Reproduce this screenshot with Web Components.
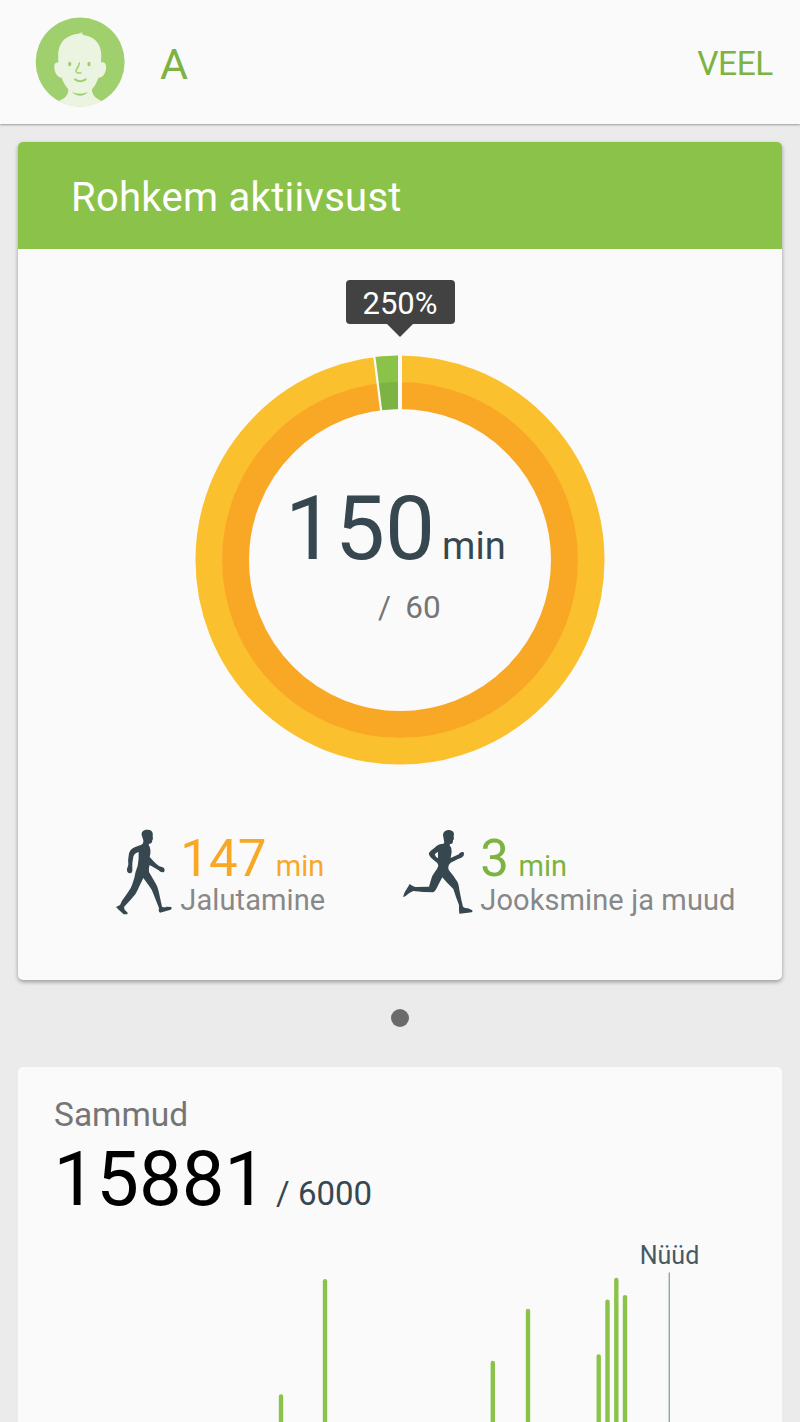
<!DOCTYPE html>
<html lang="et">
<head>
<meta charset="UTF-8">
<meta name="viewport" content="width=device-width, initial-scale=1.0">
<title>Rohkem aktiivsust</title>
<style>
  html, body {
    margin: 0;
    height: 1422px;
    overflow: hidden;
    background-color: #ebebeb;
    font-family: Roboto, "Liberation Sans", sans-serif;
  }
</style>
</head>
<body>
<health-app>
  <app-header name="A" action="VEEL"></app-header>
  <goal-card heading="Rohkem aktiivsust">
    <activity-ring value="150" unit="min" goal="60" percent="250%" share="2"></activity-ring>
    <activity-stat slot="stats" icon="walk" value="147" unit="min" label="Jalutamine" color="#f9a825"></activity-stat>
    <activity-stat slot="stats" icon="run" value="3" unit="min" label="Jooksmine ja muud" color="#7cb342"></activity-stat>
  </goal-card>
  <page-dots></page-dots>
  <steps-card label="Sammud" value="15881" goal="6000">
    <steps-chart now="Nüüd" now-x="651" bars="263:153.3,307:38,474.8:119.7,510:67.7,580.7:113.3,589.5:58.5,598.3:36.8,607:54"></steps-chart>
  </steps-card>
</health-app>

<script>
class HealthApp extends HTMLElement {
  constructor() {
    super();
    this.attachShadow({ mode: 'open' });
    this.shadowRoot.innerHTML = `
      <style>
        :host {
          display: flex;
          flex-direction: column;
          width: 800px;
        }
      </style>
      <slot></slot>
    `;
  }
}

class AppHeader extends HTMLElement {
  constructor() {
    super();
    this.attachShadow({ mode: 'open' });
    this.shadowRoot.innerHTML = `
      <style>
        :host {
          display: flex;
          align-items: center;
          box-sizing: border-box;
          height: 124px;
          padding: 0 27px 0 35px;
          background-color: #fafafa;
          box-shadow: 0 1px 2px rgba(0, 0, 0, 0.35);
          color: #7cb342;
        }

        svg {
          width: 90px;
          height: 90px;
        }

        .name {
          flex: 1;
          margin: 4px 0 0 35px;
          font-size: 43px;
          line-height: 50px;
        }

        .action {
          margin-top: 4px;
          font-size: 33.5px;
          line-height: 40px;
          letter-spacing: -0.4px;
        }
      </style>
      <svg viewBox="105 51 270 270">
        <defs><clipPath id="disc"><circle cx="240.5" cy="186" r="134"/></clipPath></defs>
        <circle cx="240.5" cy="186" r="133.5" fill="#a0cf6e"/>
        <path clip-path="url(#disc)" fill="#ebf4e0" d="M175 188C173 158 176 142 184 130C194 113 212 105 229 102C237 101 242 99 247 95L244 103L250 101L249 105C282 108 303 130 304 165L303 188C314 184 320 193 318 206C316 222 307 234 295 233C290 249 285 257 276 268C276 286 288 296 303 302L310 330H170L176 303C194 297 205 286 205 268C195 256 190 247 185 233C172 232 164 218 163 203C162 191 167 186 175 188Z"/>
        <g fill="#a0cf6e">
          <rect x="204.5" y="185" width="9" height="14" rx="4.5"/>
          <rect x="262.5" y="185" width="9" height="14" rx="4.5"/>
          <path d="M216 276Q240 286 264 276Q241 299 216 276Z"/>
        </g>
        <g fill="none" stroke="#a0cf6e" stroke-linecap="round">
          <path stroke-width="4.5" d="M238 189C237 201 228 206 228 213C228 219 235 220 243 219"/>
          <path stroke-width="6" d="M225 238Q240 249 257 238"/>
        </g>
      </svg>
      <span class="name">${this.getAttribute('name')}</span>
      <span class="action">${this.getAttribute('action')}</span>
    `;
  }
}

class GoalCard extends HTMLElement {
  constructor() {
    super();
    this.attachShadow({ mode: 'open' });
    this.shadowRoot.innerHTML = `
      <style>
        :host {
          display: flex;
          flex-direction: column;
          height: 838px;
          margin: 18px 18px 0;
          border-radius: 5px;
          background-color: #fafafa;
          box-shadow: 0 2px 4px rgba(0, 0, 0, 0.34);
        }

        .heading {
          box-sizing: border-box;
          height: 107px;
          padding: 2px 54px 0 53px;
          border-radius: 5px 5px 0 0;
          background-color: #8bc34a;
          color: #fff;
          font-size: 40px;
          line-height: 107px;
          letter-spacing: 0.28px;
        }

        .ring {
          display: flex;
          justify-content: center;
          padding-top: 106px;
        }

        .stats {
          display: grid;
          grid-template-columns: 287px auto;
          padding: 64px 0 0 97px;
        }
      </style>
      <div class="heading">${this.getAttribute('heading')}</div>
      <div class="ring"><slot></slot></div>
      <div class="stats"><slot name="stats"></slot></div>
    `;
  }
}

class ActivityRing extends HTMLElement {
  constructor() {
    super();
    this.attachShadow({ mode: 'open' });
    this.shadowRoot.innerHTML = `
      <style>
        :host {
          display: grid;
          position: relative;
          width: 410px;
          height: 410px;
        }

        svg, .center {
          grid-area: 1 / 1;
        }

        .center {
          display: flex;
          flex-direction: column;
          padding-top: 122px;
          color: #37474f;
        }

        .total {
          padding-left: 90px;
          font-size: 89px;
          line-height: 104px;
          white-space: nowrap;
        }

        .unit {
          margin-left: 7px;
          font-size: 38px;
          line-height: 0;
        }

        .goal {
          margin-top: 9px;
          padding-left: 183px;
          font-size: 31.5px;
          line-height: 36px;
          color: #757575;
          word-spacing: 6.5px;
        }

        .tooltip {
          position: absolute;
          top: -75px;
          left: 150.5px;
          width: 109px;
          height: 44px;
          border-radius: 4px;
          background-color: #424242;
          color: #fff;
          font-size: 31px;
          line-height: 47px;
          text-align: center;
        }

        .tooltip::after {
          content: "";
          position: absolute;
          top: 44px;
          left: 41px;
          border: 13.5px solid transparent;
          border-top-color: #424242;
          border-bottom: 0;
        }
      </style>
      <svg viewBox="-205 -205 410 410">
        <g fill="none" stroke-width="27">
          <circle r="191" stroke="#fbc02d"/>
          <circle r="164.5" stroke="#f9a825"/>
          <g class="share"></g>
        </g>
        <path d="M0 -207V-148" stroke="#fafafa" stroke-width="4"/>
        <path class="edge" d="M0 -207V-148" stroke="#fafafa" stroke-width="2.2"/>
      </svg>
      <div class="center">
        <div class="total">${this.getAttribute('value')}<span class="unit">${this.getAttribute('unit')}</span></div>
        <div class="goal">/ ${this.getAttribute('goal')}</div>
      </div>
      <div class="tooltip">${this.getAttribute('percent')}</div>
    `;
    this.drawShare(Number(this.getAttribute('share')));
  }

  // second activity, drawn back from twelve o'clock
  drawShare(percent) {
    const angle = percent * 3.6;
    const rad = angle * Math.PI / 180;
    const arc = (r, color) =>
      `<path stroke="${color}" d="M${-r * Math.sin(rad)} ${-r * Math.cos(rad)}A${r} ${r} 0 0 1 0 ${-r}"/>`;
    this.shadowRoot.querySelector('.share').innerHTML = arc(191, '#8bc34a') + arc(164.5, '#7cb342');
    this.shadowRoot.querySelector('.edge').setAttribute('transform', `rotate(${-angle})`);
  }
}

const ICONS = {
  walk: {
    box: '45 28 175 260',
    path: 'M125 46C123 34 134 29 144 30C156 31 160 38 158 50L159 58L157 61C157 69 153 73 147 72L146 76C152 84 153 98 149 112L160 124Q168 133 178 140L188 143C194 145 196 152 192 157C186 160 180 156 176 152L149 136Q145 146 147 157L168 193Q174 203 176 215L186 261Q194 264 200 261L214 262Q217 267 212 270L196 275L180 279L176 274L177 265L160 222Q157 212 148 200L130 175L118 200Q112 214 106 224L92 240L72 262L74 270L83 279L82 284H71L56 270L48 262L60 256L66 243L84 218Q93 206 96 196L103 175Q105 158 113 138Q117 118 116 97Q103 101 100 111L97 130L97 148C98 156 95 161 90 161C83 161 80 155 81 148L85 135Q83 122 86 108Q88 88 104 83L122 76Q131 74 130 62Z'
  },
  run: {
    box: '36 28 214 260',
    path: 'M160 52C156 38 166 31 177 31C190 32 194 40 191 50L192 58L189 62C190 70 186 74 180 73L179 77Q186 84 185 97L182 115L200 107L207 104C207 98 217 95 221 98C224 106 220 112 214 114L204 118L182 129Q175 134 175 142Q174 148 178 153L190 168L202 186Q206 192 208 210L214 240L219 261Q226 267 234 266L247 272Q249 276 245 278L228 280L208 282L207 270V256L198 232L190 208L170 188L157 173L145 195Q138 212 130 218L100 217L70 214L58 220L46 230L39 232L44 218L56 198L59 193L68 199L76 202L117 201L122 184Q126 166 135 156Q143 146 145 138Q144 132 141 129L130 120Q114 107 117 99Q122 92 134 84Q146 72 156 73Q165 73 162 63ZM144 96L134 104Q137 113 144 116Z'
  }
};

class ActivityStat extends HTMLElement {
  constructor() {
    super();
    const icon = ICONS[this.getAttribute('icon')];
    const width = icon.box.split(' ')[2] / 3;
    this.attachShadow({ mode: 'open' });
    this.shadowRoot.innerHTML = `
      <style>
        :host {
          display: flex;
          white-space: nowrap;
        }

        svg {
          height: 86.67px;
          fill: #37474f;
          fill-rule: evenodd;
        }

        .text {
          margin-left: 7px;
        }

        .value {
          font-size: 51px;
          line-height: 60px;
        }

        .unit {
          margin-left: 9.5px;
          font-size: 29px;
          line-height: 0;
        }

        .label {
          margin-top: -5px;
          font-size: 29px;
          line-height: 33px;
          letter-spacing: 0.1px;
          color: #888;
        }
      </style>
      <svg viewBox="${icon.box}" style="width: ${width}px"><path d="${icon.path}"/></svg>
      <div class="text">
        <div class="value" style="color: ${this.getAttribute('color')}">${this.getAttribute('value')}<span class="unit">${this.getAttribute('unit')}</span></div>
        <div class="label">${this.getAttribute('label')}</div>
      </div>
    `;
  }
}

class PageDots extends HTMLElement {
  constructor() {
    super();
    this.attachShadow({ mode: 'open' });
    this.shadowRoot.innerHTML = `
      <style>
        :host {
          display: flex;
          justify-content: center;
          padding: 28.5px 0 40px;
        }

        span {
          width: 18px;
          height: 18px;
          border-radius: 50%;
          background-color: #6b6b6b;
        }
      </style>
      <span></span>
    `;
  }
}

class StepsCard extends HTMLElement {
  constructor() {
    super();
    this.attachShadow({ mode: 'open' });
    this.shadowRoot.innerHTML = `
      <style>
        :host {
          display: flex;
          flex-direction: column;
          height: 356px;
          margin: 0 18px;
          border-radius: 5px 5px 0 0;
          background-color: #fafafa;
          overflow: hidden;
        }

        .label {
          padding: 28.5px 0 0 36px;
          font-size: 33.5px;
          line-height: 40px;
          color: #757575;
        }

        .value {
          padding-left: 35.5px;
          font-size: 76px;
          line-height: 88px;
          color: #000;
        }

        .goal {
          margin-left: 9px;
          font-size: 33px;
          line-height: 0;
          color: #37474f;
        }
      </style>
      <div class="label">${this.getAttribute('label')}</div>
      <div class="value">${this.getAttribute('value')}<span class="goal">/ ${this.getAttribute('goal')}</span></div>
      <slot></slot>
    `;
  }
}

class StepsChart extends HTMLElement {
  constructor() {
    super();
    this.attachShadow({ mode: 'open' });
    const nowX = this.getAttribute('now-x');
    // each bar is "x:top", running down below the fold
    const bars = this.getAttribute('bars').split(',').map(bar => {
      const [x, top] = bar.split(':').map(Number);
      return `<path d="M${x} ${top + 2.2}V220"/>`;
    }).join('');
    this.shadowRoot.innerHTML = `
      <style>
        :host {
          display: block;
          margin-top: 18px;
        }

        svg {
          display: block;
        }

        text {
          font-size: 25px;
          fill: #455a64;
          text-anchor: middle;
        }
      </style>
      <svg width="764" height="181" viewBox="0 0 764 181">
        <g stroke="#8bc34a" stroke-width="4.4" stroke-linecap="round">${bars}</g>
        <path d="M${nowX}.3 31.5V181" stroke="#90a4ae" stroke-width="1.4"/>
        <text x="${nowX}.5" y="23.4">${this.getAttribute('now')}</text>
      </svg>
    `;
  }
}

customElements.define('health-app', HealthApp);
customElements.define('app-header', AppHeader);
customElements.define('goal-card', GoalCard);
customElements.define('activity-ring', ActivityRing);
customElements.define('activity-stat', ActivityStat);
customElements.define('page-dots', PageDots);
customElements.define('steps-card', StepsCard);
customElements.define('steps-chart', StepsChart);
</script>
</body>
</html>
